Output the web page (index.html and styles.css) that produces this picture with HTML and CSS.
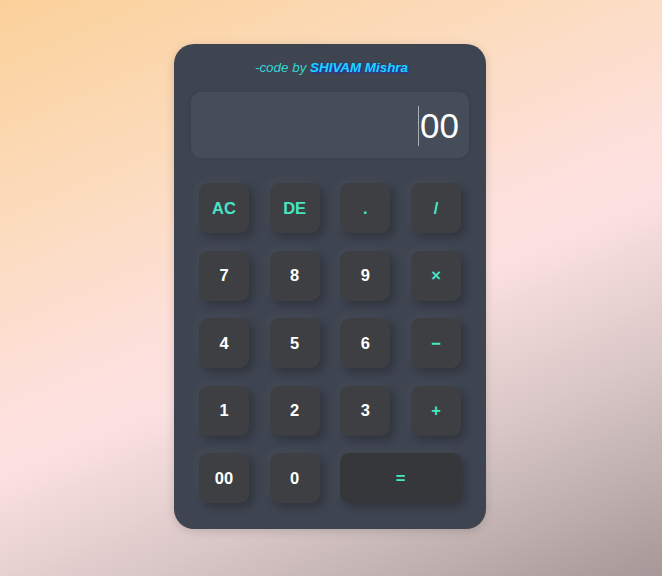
FILE: index.html
```html
<!DOCTYPE html>
<html lang="en">
<head>
<meta charset="utf-8">
<title>Calculator</title>
<link rel="stylesheet" href="styles.css">
</head>
<body>
<div class="calc">
  <p class="credit">-code by <b>SHIVAM Mishra</b></p>
  <div class="display"><span class="caret"></span><span class="value">00</span></div>
  <div class="keys">
    <button class="key op">AC</button>
    <button class="key op">DE</button>
    <button class="key op">.</button>
    <button class="key op">/</button>
    <button class="key">7</button>
    <button class="key">8</button>
    <button class="key">9</button>
    <button class="key op">&#215;</button>
    <button class="key">4</button>
    <button class="key">5</button>
    <button class="key">6</button>
    <button class="key op">&#8722;</button>
    <button class="key">1</button>
    <button class="key">2</button>
    <button class="key">3</button>
    <button class="key op">+</button>
    <button class="key">00</button>
    <button class="key">0</button>
    <button class="key op equal">=</button>
  </div>
</div>
</body>
</html>
```
FILE: styles.css
```css
* { box-sizing: border-box; }
html, body { margin: 0; padding: 0; }
body {
  width: 662px;
  height: 576px;
  overflow: hidden;
  font-family: "Liberation Sans", Arial, sans-serif;
  background: linear-gradient(157deg, #fbd19a 0%, #fcdcbf 28%, #fde0dc 48%, #fbe0e0 56%, #d6c4c4 76%, #a69898 100%);
  display: flex;
  justify-content: center;
  padding: 44px 2px 0 0;
}
.calc {
  width: 312px;
  height: 485px;
  background: #3e4450;
  border-radius: 20px;
  padding: 12px 17px 0;
  box-shadow: 0 2px 10px rgba(0,0,0,0.15);
}
.credit {
  margin: 0;
  text-align: center;
  font-size: 13.4px;
  font-style: italic;
  color: #33d6d6;
  line-height: 23px;
  padding-left: 3px;
}
.credit b {
  color: #16d8ff;
  text-shadow: 1px 1px 2px #1a2bd0;
}
.display {
  margin-top: 13px;
  height: 66px;
  background: #454d5a;
  border-radius: 10px;
  display: flex;
  align-items: center;
  justify-content: flex-end;
  padding-right: 10px;
  box-shadow: 0 0 4px rgba(0,0,0,0.08);
}
.caret {
  width: 1px;
  height: 40px;
  background: #aab0b8;
  margin-top: 2px;
  margin-right: 1px;
}
.value {
  color: #ffffff;
  font-size: 35px;
  line-height: 40px;
  margin-top: 2px;
}
.keys {
  margin: 25px 0 0 8px;
  width: 262px;
  display: grid;
  grid-template-columns: repeat(4, 50px);
  grid-auto-rows: 50px;
  justify-content: space-between;
  row-gap: 17.5px;
}
.key {
  border: none;
  border-radius: 9px;
  background: #3e3f42;
  color: #ffffff;
  font-family: "Liberation Sans", Arial, sans-serif;
  font-weight: bold;
  font-size: 16.5px;
  padding: 0;
  box-shadow: -3px -3px 6px rgba(255,255,255,0.04), 4px 4px 9px rgba(0,0,0,0.24);
}
.op { color: #46e6c2; }
.equal {
  grid-column: span 2;
  background: #35373a;
}
```
